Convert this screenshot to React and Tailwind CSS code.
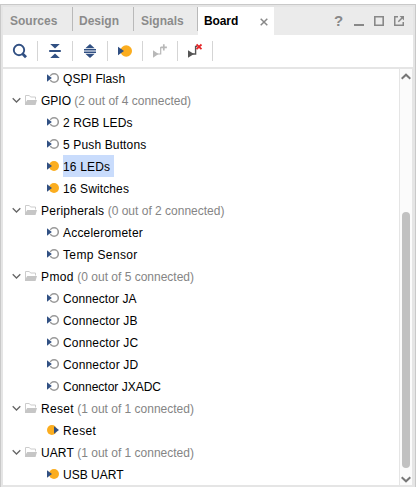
import React from 'react';

const tree = [
  { label: 'QSPI Flash', state: 'open', tracking: 'tracking-[0.08px]' },
  { label: 'GPIO', note: '(2 out of 4 connected)' },
  { label: '2 RGB LEDs', state: 'open', tracking: 'tracking-[0.08px]' },
  { label: '5 Push Buttons', state: 'open', tracking: 'tracking-[0.14px]' },
  { label: '16 LEDs', state: 'connected', selected: true, tracking: 'tracking-[0.18px]' },
  { label: '16 Switches', state: 'connected', tracking: 'tracking-[0.12px]' },
  { label: 'Peripherals', note: '(0 out of 2 connected)', tracking: 'tracking-[0.24px]' },
  { label: 'Accelerometer', state: 'open', tracking: 'tracking-[0.2px]' },
  { label: 'Temp Sensor', state: 'open', tracking: 'tracking-[0.36px]' },
  { label: 'Pmod', note: '(0 out of 5 connected)', tracking: 'tracking-[0.4px]' },
  { label: 'Connector JA', state: 'open', tracking: 'tracking-[0.08px]' },
  { label: 'Connector JB', state: 'open', tracking: 'tracking-[0.16px]' },
  { label: 'Connector JC', state: 'open', tracking: 'tracking-[0.16px]' },
  { label: 'Connector JD', state: 'open', tracking: 'tracking-[0.16px]' },
  { label: 'Connector JXADC', state: 'open' },
  { label: 'Reset', note: '(1 out of 1 connected)', tracking: 'tracking-[0.3px]' },
  { label: 'Reset', state: 'output', tracking: 'tracking-[0.4px]' },
  { label: 'UART', note: '(1 out of 1 connected)', tracking: 'tracking-[0.1px]' },
  { label: 'USB UART', state: 'connected' },
];

function PortIcon({ state }) {
  return (
    <svg className="h-3 w-3 shrink-0" viewBox="0 0 12 12">
      {state === 'open' && (
        <>
          <circle cx="7.1" cy="6" r="4.2" fill="none" stroke="#999" strokeWidth="1.6" />
          <path d="M0 1.5v9L6 6z" fill="#fff" />
          <path d="M0 2.2v7.6L4.8 6z" fill="#315083" />
        </>
      )}
      {state === 'connected' && (
        <>
          <circle cx="7" cy="6" r="5" fill="#fbad1f" />
          <path d="M0 2.2v7.6L5 6z" fill="#315083" />
        </>
      )}
      {state === 'output' && (
        <>
          <circle cx="4.9" cy="6" r="4.9" fill="#fbad1f" />
          <path d="M7 2.2v7.6L12 6z" fill="#315083" />
        </>
      )}
    </svg>
  );
}

function Folder() {
  return (
    <svg className="ml-[4px] h-3 w-3 shrink-0" viewBox="0 0 12 12">
      <path d="M.5 10.5v-9h3.8L5.6 3h4.9v2.5" fill="none" stroke="#cccccc" />
      <path d="M0 11V9.8L2.2 6H12l-1.5 5z" fill="#c6c6c6" />
    </svg>
  );
}

function Row({ item }) {
  if (item.note) {
    return (
      <div className="flex h-[22px] shrink-0 items-center pl-[9px]">
        <svg className="h-3 w-[9px] shrink-0" viewBox="0 0 9 12">
          <path d="M.7 4.2 4.5 8l3.8-3.8" fill="none" stroke="#666" strokeWidth="1.3" />
        </svg>
        <Folder />
        <span className="ml-[4px] whitespace-pre pt-[2px]">
          <span className={item.tracking}>{item.label}</span>
          <span className="text-[#858585]"> {item.note}</span>
        </span>
      </div>
    );
  }
  return (
    <div className="flex h-[22px] shrink-0 items-center pl-[44px]">
      <PortIcon state={item.state} />
      <span className={`ml-[4px] flex h-[22px] items-center pt-[2px] ${item.tracking || ''} ${item.selected ? 'w-[51px] bg-[#c9dcfc]' : ''}`}>
        {item.label}
      </span>
    </div>
  );
}

function Tool({ children }) {
  return (
    <>
      <div className="flex w-[34px] shrink-0 items-center justify-center">
        <svg className="h-4 w-4" viewBox="0 0 16 16" fill="none">{children}</svg>
      </div>
      <div className="h-5 w-px shrink-0 bg-[#d5d5d5]" />
    </>
  );
}

export default function App() {
  return (
    <div className="flex h-[487px] w-[418px] flex-col overflow-hidden bg-white pr-[2px] pt-[4px] font-['Liberation_Sans',Arial,sans-serif] text-[12px] leading-[14px] text-black">
      <div className="flex min-h-0 flex-1 flex-col border-x border-t border-[#c9c9c9]">
        <div className="flex min-h-0 flex-1 flex-col border-x-2 border-b-2 border-[#e5e5e5]">
          <div className="flex h-[30px] shrink-0 border-t-2 border-[#e5e5e5] bg-[#ebebeb] text-[12px] font-bold text-[#8b8b8b]">
            <div className="mb-[4px] flex w-[70px] items-center border-r border-[#b9b9b9] pl-[7px] pt-[3px]">Sources</div>
            <div className="mb-[4px] flex w-[61px] items-center border-r border-[#b9b9b9] pl-[6px] pt-[3px]">Design</div>
            <div className="mb-[4px] flex w-[64px] items-center border-r border-[#b9b9b9] pl-[7px] pt-[3px]">Signals</div>
            <div className="flex w-[76px] items-center bg-white pl-[6px] text-black">
              <span className="w-[34px] tracking-[-0.1px]">Board</span>
              <svg className="ml-[22px] mt-[2px] h-2 w-2 shrink-0" viewBox="0 0 8 8">
                <path d="m.7.7 6.6 6.6m0-6.6L.7 7.3" stroke="#888" strokeWidth="1.5" />
              </svg>
            </div>
            <div className="ml-auto flex items-center pr-[9px] text-[#888]">
              <span className="w-[9px] text-[15px] leading-[14px]">?</span>
              <svg className="ml-[11px] h-3 w-[10px]" viewBox="0 0 10 12"><path d="M0 10h10" stroke="#888" strokeWidth="2" /></svg>
              <svg className="ml-[10px] h-[10px] w-[10px]" viewBox="0 0 10 10"><path d="M.8.8h8.4v8.4H.8z" fill="none" stroke="#888" strokeWidth="1.6" /></svg>
              <svg className="ml-[10px] h-[10px] w-[10px]" viewBox="0 0 10 10">
                <path d="M4 .75H.75v8.5h8.5V6M4.3 5.7 8 2" fill="none" stroke="#888" strokeWidth="1.5" />
                <path d="M5.5 0H10v4.5z" fill="#888" />
              </svg>
            </div>
          </div>

          <div className="flex h-8 shrink-0 items-center">
            <Tool>
              <circle cx="7" cy="7" r="5.2" stroke="#315083" strokeWidth="1.9" />
              <path d="m10.3 10.5 3.7 3.7" stroke="#315083" strokeWidth="2.8" />
            </Tool>
            <Tool>
              <path d="M3.2 1h9.6L8 5.4zM3.2 15h9.6L8 10.6zM2.2 7.1h11.6v1.8H2.2z" fill="#315083" />
            </Tool>
            <Tool>
              <path d="M3.3 5.3h9.4L8 1zM3.3 10.7h9.4L8 15zM2 6.1h12v1.5H2zM2 8.4h12v1.5H2z" fill="#315083" />
            </Tool>
            <Tool>
              <circle cx="9.2" cy="8" r="5.8" fill="#fbad1f" />
              <path d="M1 3.8v8.4L7 8z" fill="#315083" />
            </Tool>
            <Tool>
              <path d="M1 7.3v7.4L6.5 11z" fill="#b8b8b8" />
              <path d="M5 11h3.7V4.5H11" stroke="#b8b8b8" strokeWidth="1.2" />
              <path d="M8.7 4.3h6.2M11.8 1.2v6.2" stroke="#b8b8b8" strokeWidth="1.7" />
            </Tool>
            <Tool>
              <path d="M1 7.2v7.6L7 11z" fill="#555" />
              <path d="M5 11h3.6V3.4H10" stroke="#555" strokeWidth="1.4" />
              <path d="m9.5 1.5 5 4.6m0-4.6-5 4.6" stroke="#e52528" strokeWidth="1.8" />
            </Tool>
          </div>

          <div className="h-[2px] shrink-0 bg-[#e5e5e5]" />

          <div className="flex min-h-0 flex-1">
            <div className="flex min-w-0 flex-1 flex-col overflow-hidden">
              <div className="-mt-[2px] flex flex-col">
                {tree.map((item, i) => <Row key={i} item={item} />)}
              </div>
            </div>
            <div className="flex w-[14px] shrink-0 flex-col items-center border-x border-[#e5e5e5] bg-[#fbfbfb]">
              <svg className="mt-[4px] h-[7px] w-[10px] shrink-0" viewBox="0 0 10 7"><path d="m.7 5.7 4.3-4 4.3 4" fill="none" stroke="#777" strokeWidth="2" /></svg>
              <div className="mt-[132px] h-[256px] w-2 shrink-0 rounded-full bg-[#c1c1c1]" />
              <svg className="mt-[8px] h-[7px] w-[10px] shrink-0" viewBox="0 0 10 7"><path d="m.7 1.3 4.3 4 4.3-4" fill="none" stroke="#777" strokeWidth="2" /></svg>
            </div>
          </div>
        </div>
      </div>
    </div>
  );
}
